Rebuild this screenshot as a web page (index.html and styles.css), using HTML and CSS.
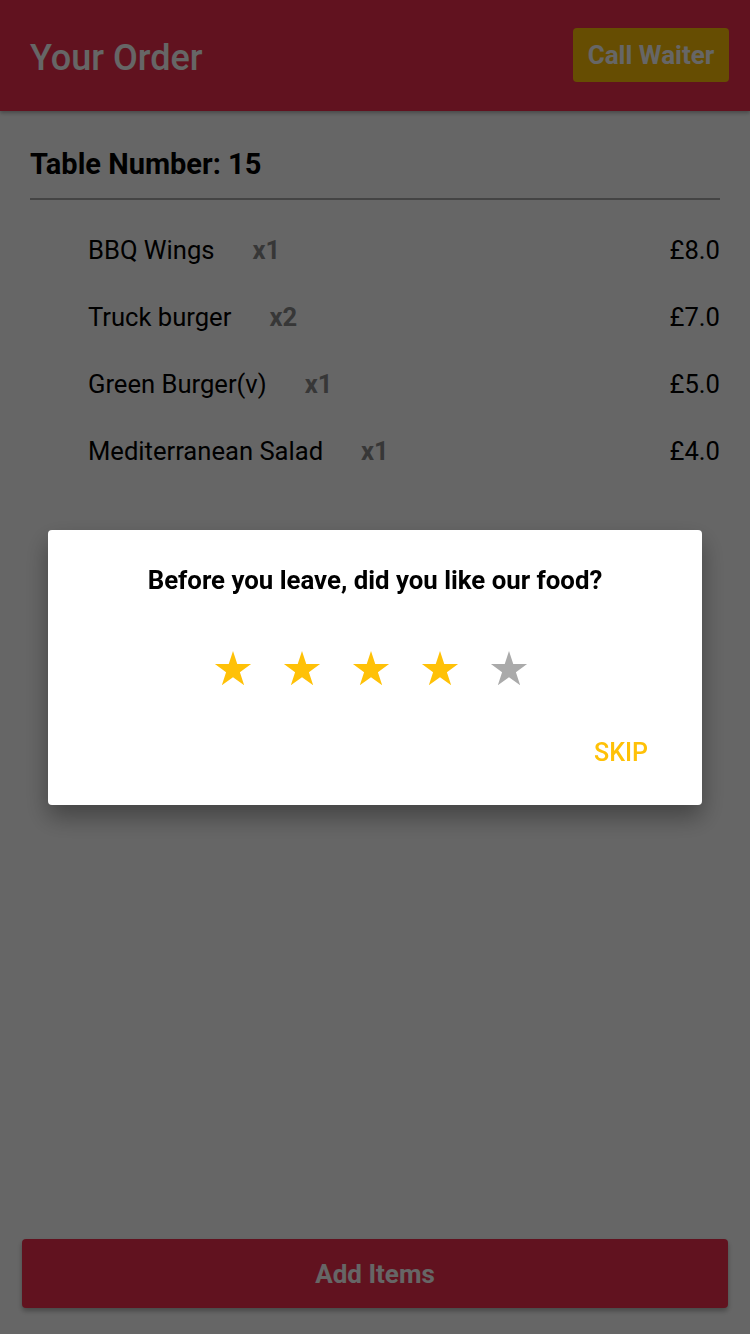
FILE: index.html
```html
<!DOCTYPE html>
<html lang="en">
<head>
<meta charset="utf-8">
<title>Your Order</title>
<link rel="stylesheet" href="styles.css">
</head>
<body>
<div class="app">
  <header class="topbar">
    <h1 class="title">Your Order</h1>
    <button class="waiter-btn">Call Waiter</button>
  </header>
  <main class="content">
    <div class="table-number">Table Number: 15</div>
    <ul class="items">
      <li class="item"><span class="name">BBQ Wings</span><span class="qty">x1</span><span class="price">£8.0</span></li>
      <li class="item"><span class="name">Truck burger</span><span class="qty">x2</span><span class="price">£7.0</span></li>
      <li class="item"><span class="name">Green Burger(v)</span><span class="qty">x1</span><span class="price">£5.0</span></li>
      <li class="item"><span class="name">Mediterranean Salad</span><span class="qty">x1</span><span class="price">£4.0</span></li>
    </ul>
  </main>
  <button class="add-btn">Add Items</button>
</div>
<div class="overlay">
  <div class="dialog">
    <div class="dialog-title">Before you leave, did you like our food?</div>
    <div class="stars">
      <svg class="star on" viewBox="0 0 40 40"><polygon points="20,1 24.49,14.82 39.02,14.82 27.27,23.36 31.76,37.18 20,28.64 8.24,37.18 12.73,23.36 0.98,14.82 15.51,14.82"/></svg>
      <svg class="star on" viewBox="0 0 40 40"><polygon points="20,1 24.49,14.82 39.02,14.82 27.27,23.36 31.76,37.18 20,28.64 8.24,37.18 12.73,23.36 0.98,14.82 15.51,14.82"/></svg>
      <svg class="star on" viewBox="0 0 40 40"><polygon points="20,1 24.49,14.82 39.02,14.82 27.27,23.36 31.76,37.18 20,28.64 8.24,37.18 12.73,23.36 0.98,14.82 15.51,14.82"/></svg>
      <svg class="star on" viewBox="0 0 40 40"><polygon points="20,1 24.49,14.82 39.02,14.82 27.27,23.36 31.76,37.18 20,28.64 8.24,37.18 12.73,23.36 0.98,14.82 15.51,14.82"/></svg>
      <svg class="star off" viewBox="0 0 40 40"><polygon points="20,1 24.49,14.82 39.02,14.82 27.27,23.36 31.76,37.18 20,28.64 8.24,37.18 12.73,23.36 0.98,14.82 15.51,14.82"/></svg>
    </div>
    <div class="dialog-actions"><button class="skip">SKIP</button></div>
  </div>
</div>
</body>
</html>
```

FILE: styles.css
```css
* { box-sizing: border-box; }
html, body { margin: 0; padding: 0; }
body {
  font-family: Roboto, "Liberation Sans", sans-serif;
  background: #ffffff;
  width: 750px;
  height: 1334px;
  overflow: hidden;
}
.app {
  height: 1334px;
  display: flex;
  flex-direction: column;
}
.topbar {
  height: 111px;
  flex: 0 0 111px;
  background: #f22f4e;
  display: flex;
  align-items: center;
  justify-content: space-between;
  padding: 0 21px 0 30px;
  box-shadow: 0 2px 4px rgba(0,0,0,0.3);
}
.title {
  margin: 0;
  color: #ffffff;
  font-size: 36px;
  font-weight: 500;
  line-height: 1;
  margin-top: 4px;
}
.waiter-btn {
  font-family: inherit;
  background: #ffc107;
  color: #ffffff;
  border: none;
  border-radius: 4px;
  width: 156px;
  height: 54px;
  font-size: 26px;
  font-weight: 700;
  padding: 0;
  margin-top: -1px;
}
.content {
  padding: 0 30px;
}
.table-number {
  padding-top: 36px;
  padding-bottom: 16px;
  font-size: 29px;
  font-weight: 700;
  line-height: 35px;
  color: #000;
  border-bottom: 2px solid #aaaaaa;
}
.items {
  list-style: none;
  margin: 16px 0 0;
  padding: 0 0 0 58px;
}
.item {
  display: flex;
  align-items: center;
  height: 67px;
  font-size: 25.6px;
  color: #000;
}
.qty {
  margin-left: 38px;
  font-weight: 700;
  color: #8a8a8a;
}
.price {
  margin-left: auto;
}
.add-btn {
  margin: auto 22px 26px;
  height: 69px;
  flex: 0 0 69px;
  background: #f22f4e;
  color: #ffffff;
  border: none;
  border-radius: 4px;
  font-family: inherit;
  font-size: 26px;
  font-weight: 700;
  box-shadow: 0 3px 5px rgba(0,0,0,0.3);
}
.overlay {
  position: fixed;
  inset: 0;
  background: rgba(0,0,0,0.6);
  display: flex;
  align-items: center;
  justify-content: center;
}
.dialog {
  width: 654px;
  height: 275px;
  background: #ffffff;
  border-radius: 4px;
  box-shadow: 0 12px 24px rgba(0,0,0,0.35);
  padding-top: 35px;
}
.dialog-title {
  text-align: center;
  font-size: 25.8px;
  font-weight: 700;
  line-height: 30px;
  color: #000;
}
.stars {
  margin-top: 55px;
  display: flex;
  justify-content: center;
  gap: 31px;
  padding-right: 8px;
}
.star {
  width: 38px;
  height: 38px;
  display: block;
}
.star.on { fill: #ffc107; }
.star.off { fill: #aaaaaa; }
.dialog-actions {
  margin-top: 50px;
  display: flex;
  justify-content: flex-end;
  padding-right: 54px;
}
.skip {
  background: none;
  border: none;
  padding: 0;
  font-family: inherit;
  font-size: 25px;
  font-weight: 500;
  line-height: 30px;
  color: #ffc107;
}
```
